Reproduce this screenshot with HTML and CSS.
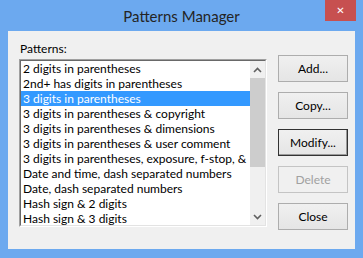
FILE: index.html
```html
<!DOCTYPE html>
<html>
<head>
    <meta charset="UTF-8" />
    <title>Patterns Manager</title>
    <link rel="stylesheet" href="styles.css">
</head>
<body>
    <div class="window">
        <div class="titlebar">
            <span class="title">Patterns Manager</span>
            <span class="close">&#x2715;</span>
        </div>
        <div class="client">
            <div class="patterns">
                <div class="label">Patterns:</div>
                <div class="listbox">
                    <div class="listbox-inner">
                        <div class="items">
                            <div class="item">2 digits in parentheses</div>
                            <div class="item">2nd+ has digits in parentheses</div>
                            <div class="item selected">3 digits in parentheses</div>
                            <div class="item">3 digits in parentheses &amp; copyright</div>
                            <div class="item">3 digits in parentheses &amp; dimensions</div>
                            <div class="item">3 digits in parentheses &amp; user comment</div>
                            <div class="item">3 digits in parentheses, exposure, f-stop, &amp;</div>
                            <div class="item">Date and time, dash separated numbers</div>
                            <div class="item">Date, dash separated numbers</div>
                            <div class="item">Hash sign &amp; 2 digits</div>
                            <div class="item">Hash sign &amp; 3 digits</div>
                        </div>
                        <div class="scrollbar">
                            <div class="arrow">
                                <svg width="9" height="6" viewBox="0 0 9 6"><path d="M1 5 L4.5 1.5 L8 5" fill="none" stroke="#606060" stroke-width="1.6"/></svg>
                            </div>
                            <div class="track">
                                <div class="thumb"></div>
                            </div>
                            <div class="arrow">
                                <svg width="9" height="6" viewBox="0 0 9 6"><path d="M1 1 L4.5 4.5 L8 1" fill="none" stroke="#606060" stroke-width="1.6"/></svg>
                            </div>
                        </div>
                    </div>
                </div>
            </div>
            <div class="buttons">
                <button class="btn">Add...</button>
                <button class="btn">Copy...</button>
                <button class="btn default">Modify...</button>
                <button class="btn" disabled>Delete</button>
                <button class="btn">Close</button>
            </div>
        </div>
    </div>
</body>
</html>
```

FILE: styles.css
```css
body {
    margin: 0;
    background-color: #6ca9ef;
}

.window {
    width: 363px;
    height: 258px;
    box-sizing: border-box;
    background-color: #6ca9ef;
    display: flex;
    flex-direction: column;
    font-family: Lato, "Noto Sans", sans-serif;
}

.titlebar {
    height: 31px;
    position: relative;
    display: flex;
    justify-content: center;
    align-items: center;
}

.title {
    font-size: 15px;
    color: #242424;
    padding-top: 1px;
}

.close {
    position: absolute;
    top: 0;
    right: 7px;
    width: 31px;
    height: 21px;
    background-color: #c75050;
    color: white;
    font-family: "DejaVu Sans", sans-serif;
    font-size: 10px;
    font-weight: bold;
    display: flex;
    justify-content: center;
    align-items: center;
}

.client {
    margin: 0 8px;
    height: 218px;
    background-color: #f0f0f0;
    display: flex;
    padding: 10px 0 0 11px;
    box-sizing: border-box;
}

.label {
    font-size: 12px;
    color: #000;
    height: 18px;
    line-height: 16px;
    padding-left: 1px;
}

.listbox {
    width: 248px;
    height: 168px;
    box-sizing: border-box;
    border: 1px solid;
    border-color: #a0a0a0 #ffffff #ffffff #a0a0a0;
}

.listbox-inner {
    height: 100%;
    box-sizing: border-box;
    border: 1px solid;
    border-color: #696969 #e3e3e3 #e3e3e3 #696969;
    background-color: white;
    display: flex;
}

.items {
    width: 229px;
    overflow: hidden;
}

.item {
    height: 15px;
    line-height: 15px;
    font-size: 12px;
    padding-left: 2px;
    white-space: nowrap;
    color: #000;
}

.item.selected {
    background-color: #3399ff;
    color: white;
}

.scrollbar {
    flex: 1;
    background-color: #f0f0f0;
    display: flex;
    flex-direction: column;
}

.arrow {
    height: 17px;
    display: flex;
    justify-content: center;
    align-items: center;
}

.track {
    flex: 1;
}

.thumb {
    height: 89px;
    background-color: #cdcdcd;
}

.buttons {
    margin-left: 11px;
    padding-top: 14px;
    display: flex;
    flex-direction: column;
    gap: 10px;
}

.btn {
    width: 70px;
    height: 27px;
    font-family: Lato, "Noto Sans", sans-serif;
    font-size: 12px;
    color: #000;
    border: 1px solid #adadad;
    background: linear-gradient(#f0f0f0, #e5e5e5);
    padding: 0;
}

.btn.default {
    border-color: #333333;
    box-shadow: inset -1px -1px #9a9a9a;
}

.btn:disabled {
    color: #a0a0a0;
    border-color: #c4c4c4;
    background: #f0f0f0;
}
```
